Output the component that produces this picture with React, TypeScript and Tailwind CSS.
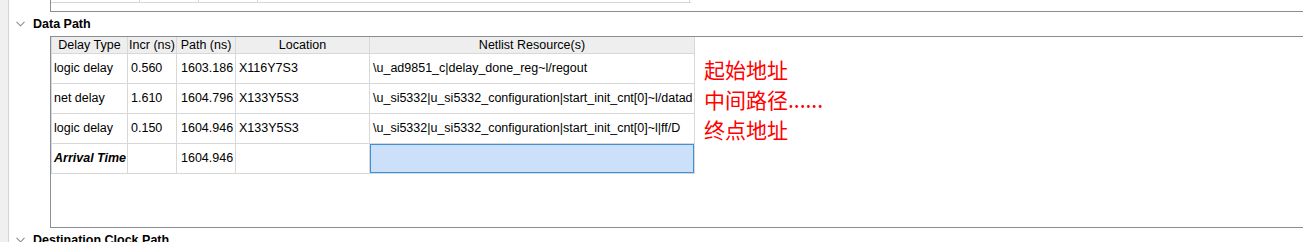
import React from "react";

const dark = "border-[#8a8e94]";

function Chevron() {
  return (
    <svg width="9" height="6" viewBox="0 0 9 6" className="block">
      <polyline points="0.5,0.8 4.5,4.8 8.5,0.8" fill="none" stroke="#8c8c8c" strokeWidth="1.1" />
    </svg>
  );
}

function SectionHeader({ title }: { title: string }) {
  return (
    <div className="h-[24px] flex items-center shrink-0">
      <div className="w-[24px] pl-[7px] flex items-center">
        <Chevron />
      </div>
      <span className="font-bold text-[12.5px] text-black leading-none">{title}</span>
    </div>
  );
}

const cols = "grid grid-cols-[76px_49px_59px_134px_325px]";

type Row = { type: string; incr: string; path: string; loc: string; net: string; bold?: boolean };

const rows: Row[] = [
  { type: "logic delay", incr: "0.560", path: "1603.186", loc: "X116Y7S3", net: "\\u_ad9851_c|delay_done_reg~l/regout" },
  { type: "net delay", incr: "1.610", path: "1604.796", loc: "X133Y5S3", net: "\\u_si5332|u_si5332_configuration|start_init_cnt[0]~l/datad" },
  { type: "logic delay", incr: "0.150", path: "1604.946", loc: "X133Y5S3", net: "\\u_si5332|u_si5332_configuration|start_init_cnt[0]~l|ff/D" },
  { type: "Arrival Time", incr: "", path: "1604.946", loc: "", net: "", bold: true },
];

export default function App() {
  return (
    <div
      className="w-[1303px] h-[242px] overflow-hidden bg-white flex text-black"
      style={{ fontFamily: '"Liberation Sans", Arial, sans-serif' }}
    >
      <div className="w-[9px] shrink-0 bg-[#f0f0f0] border-r border-[#d4d4d4]" />
      <div className="flex-1 flex flex-col min-w-0">
        {/* previous section box fragment */}
        <div className={`ml-[41px] h-[12px] shrink-0 border-l border-b ${dark}`}>
          <div className="flex h-[3px] w-[640px] border-b border-[#d8d8d8]">
            <div className="w-[89px] border-r border-[#d8d8d8]" />
            <div className="w-[59px] border-r border-[#d8d8d8]" />
            <div className="w-[59px] border-r border-[#d8d8d8]" />
            <div className="w-[432px] border-r border-[#d8d8d8]" />
          </div>
        </div>

        <SectionHeader title="Data Path" />

        <div className={`ml-[41px] h-[192px] shrink-0 border-t border-l border-b ${dark} flex`}>
          <div className="flex flex-col">
            <div className="border-l border-[#d8d8d8] text-[12.5px] leading-none">
              <div className={`${cols} h-[17px] bg-[#eeeeee]`}>
                {["Delay Type", "Incr (ns)", "Path (ns)", "Location", "Netlist Resource(s)"].map((h) => (
                  <div
                    key={h}
                    className="border-r border-b border-[#d8d8d8] flex items-center justify-center whitespace-nowrap overflow-hidden"
                  >
                    {h}
                  </div>
                ))}
              </div>
              {rows.map((r, i) => (
                <div key={i} className={`${cols} h-[30px]`}>
                  <div
                    className={`border-r border-b border-[#d8d8d8] flex items-center pl-[2px] whitespace-nowrap ${
                      r.bold ? "font-bold italic" : ""
                    }`}
                  >
                    {r.type}
                  </div>
                  <div className="border-r border-b border-[#d8d8d8] flex items-center pl-[3px]">{r.incr}</div>
                  <div className="border-r border-b border-[#d8d8d8] flex items-center pl-[4px]">{r.path}</div>
                  <div className="border-r border-b border-[#d8d8d8] flex items-center pl-[3px]">{r.loc}</div>
                  <div className="border-r border-b border-[#d8d8d8] flex items-stretch whitespace-nowrap overflow-hidden">
                    {i === 3 ? (
                      <div className="flex-1 bg-[#cce0fa] border border-[#3f8fd9]" />
                    ) : (
                      <div className="flex items-center pl-[3px]">{r.net}</div>
                    )}
                  </div>
                </div>
              ))}
            </div>
          </div>
          <div
            className="ml-[9px] pt-[17px] flex flex-col text-[21px] text-[#ff0000] leading-[30px] whitespace-nowrap"
            style={{ fontFamily: '"Noto Sans CJK SC", "Liberation Sans", sans-serif' }}
          >
            <div className="h-[30px]">起始地址</div>
            <div className="h-[30px]">中间路径......</div>
            <div className="h-[30px]">终点地址</div>
          </div>
        </div>

        <SectionHeader title="Destination Clock Path" />
      </div>
    </div>
  );
}
